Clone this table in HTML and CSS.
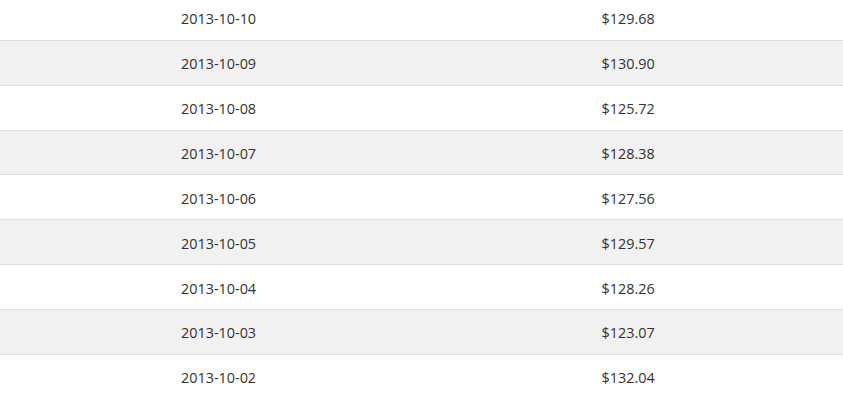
FILE: index.html
```html
<!DOCTYPE html>
<html lang="en">
<head>
    <meta charset="UTF-8">
    <meta name="viewport" content="width=device-width, initial-scale=1.0">
    <title>Prices</title>
    <link rel="stylesheet" href="styles.css">
</head>
<body>
    <div class="price-table">
        <div class="row"><span>2013-10-10</span><span>$129.68</span></div>
        <div class="row"><span>2013-10-09</span><span>$130.90</span></div>
        <div class="row"><span>2013-10-08</span><span>$125.72</span></div>
        <div class="row"><span>2013-10-07</span><span>$128.38</span></div>
        <div class="row"><span>2013-10-06</span><span>$127.56</span></div>
        <div class="row"><span>2013-10-05</span><span>$129.57</span></div>
        <div class="row"><span>2013-10-04</span><span>$128.26</span></div>
        <div class="row"><span>2013-10-03</span><span>$123.07</span></div>
        <div class="row"><span>2013-10-02</span><span>$132.04</span></div>
    </div>
</body>
</html>
```

FILE: styles.css
```css
body {
    margin: 0;
    font-family: "Open Sans", "Noto Sans", sans-serif;
    font-size: 14.4px;
    color: #333;
    background: #fff;
    overflow: hidden;
}
.price-table {
    margin-top: -4px;
}
.row {
    display: grid;
    grid-template-columns: 1fr 1fr;
    height: 43.86px;
    align-items: center;
    border-bottom: 1px solid #dedede;
}
.row:last-child {
    border-bottom: none;
}
.row:nth-child(even) {
    background-color: #f1f1f1;
}
.row span {
    padding-top: 2px;
    padding-left: 181px;
}
.row span + span {
    padding-left: 180px;
}
```
